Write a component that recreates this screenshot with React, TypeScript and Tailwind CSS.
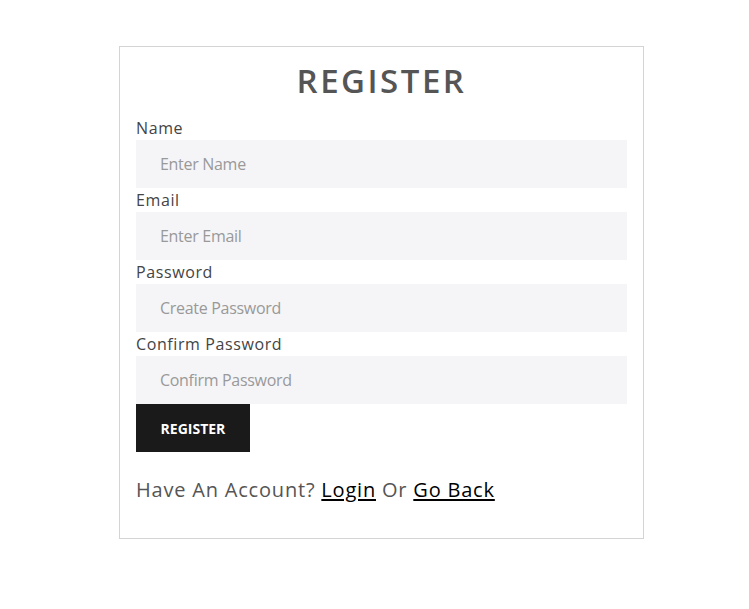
import React from 'react';

const fields = [
  { label: 'Name', placeholder: 'Enter Name', type: 'text' },
  { label: 'Email', placeholder: 'Enter Email', type: 'email' },
  { label: 'Password', placeholder: 'Create Password', type: 'password' },
  { label: 'Confirm Password', placeholder: 'Confirm Password', type: 'password' },
];

const App: React.FC = () => {
  return (
    <div
      className="min-h-screen bg-white pt-[46px]"
      style={{ fontFamily: '"Open Sans", "Noto Sans", sans-serif' }}
    >
      <div className="ml-[119px] w-[525px] border border-[#d4d4d4] px-4 pt-[7px] pb-[33px]">
        <h1 className="mb-[8px] text-center text-[33px] leading-[54px] font-semibold tracking-[2.5px] text-[#555555]">
          REGISTER
        </h1>
        <form className="flex flex-col" onSubmit={(e) => e.preventDefault()}>
          {fields.map((f) => (
            <div key={f.label} className="flex flex-col">
              <label className="text-[16px] leading-[24px] tracking-[0.6px] text-[#444444]">
                {f.label}
              </label>
              <input
                type={f.type}
                placeholder={f.placeholder}
                className="h-12 w-full bg-[#f5f5f7] px-6 text-[16px] tracking-[-0.3px] text-[#444] outline-none placeholder:text-[#999999]"
              />
            </div>
          ))}
          <div>
            <button
              type="submit"
              className="h-12 w-[114px] bg-[#1a1a1a] text-[14px] font-bold text-white"
            >
              REGISTER
            </button>
          </div>
        </form>
        <p className="mt-[23px] text-[20px] leading-[30px] tracking-[0.8px] text-[#555555]">
          Have An Account?{' '}
          <a href="#" className="text-black underline underline-offset-2">Login</a> Or{' '}
          <a href="#" className="text-black underline underline-offset-2">Go Back</a>
        </p>
      </div>
    </div>
  );
};

export default App;
